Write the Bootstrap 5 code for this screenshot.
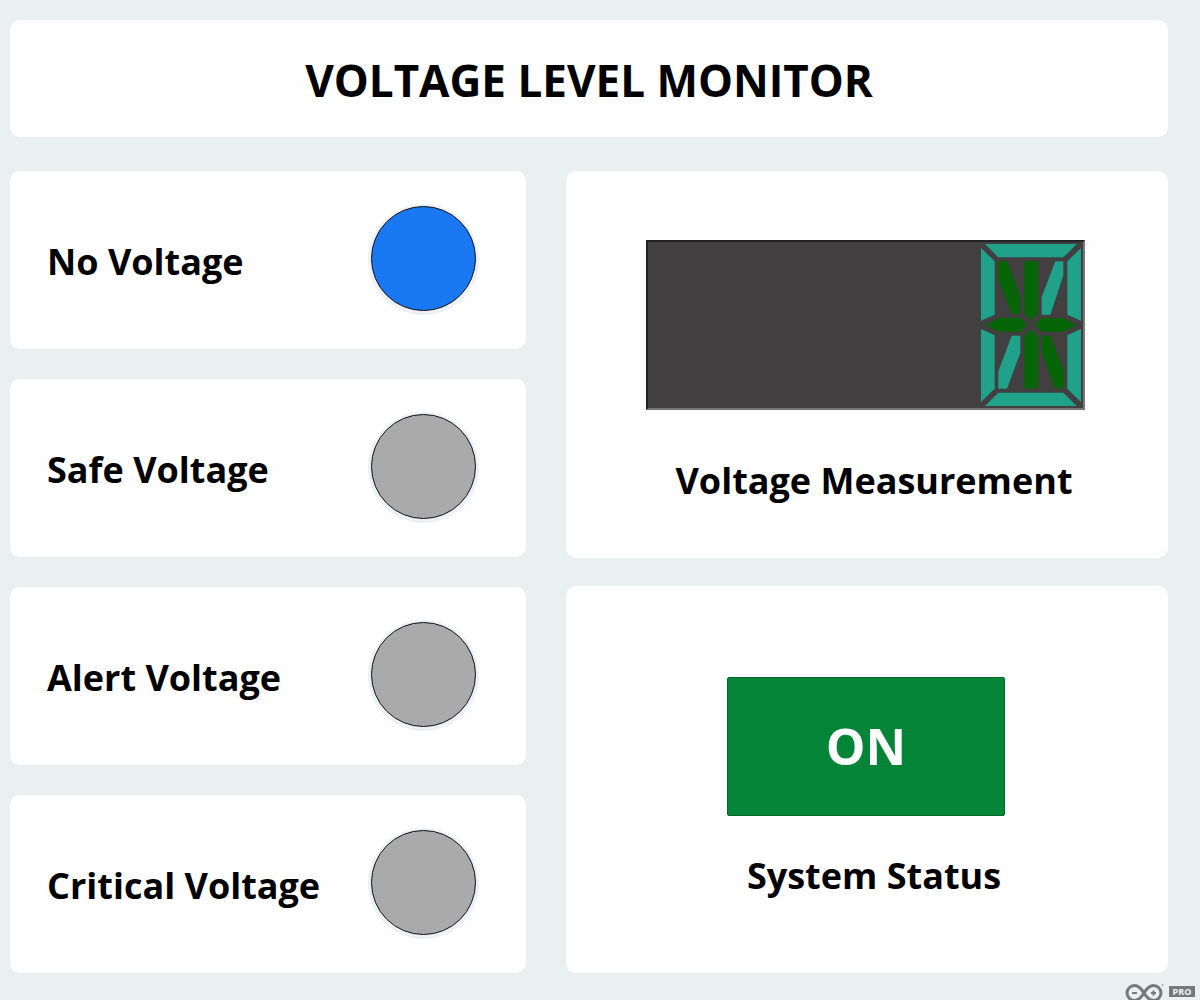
<!DOCTYPE html>
<html lang="en">
<head>
<meta charset="utf-8">
<meta name="viewport" content="width=device-width, initial-scale=1">
<title>Voltage Level Monitor</title>
<link href="https://cdn.jsdelivr.net/npm/bootstrap@5.3.0/dist/css/bootstrap.min.css" rel="stylesheet">
<style>
body{background:#eaeff0;color:#000;font-family:"Open Sans","Noto Sans",sans-serif}
.board{padding:20px 32px 0 10px}
.panel{background:#fefefe;border-radius:10px}
.title-bar{height:117px;margin-bottom:34px}
.title-bar h1{font-size:44px;line-height:60px;font-weight:700;padding-top:2px}
.panels{gap:40px}
.levels{flex:516 1 0;gap:30px}
.readings{flex:602 1 0;gap:28px}
.level{height:178px;padding:0 50px 3px 37px}
.caption{font-size:36px;line-height:50px;font-weight:700}
.level .caption{padding-top:6px}
.lamp{width:105px;height:105px;border:1px solid #111;background:#aaa;box-shadow:0 1px 0 3px #edf0f4}
.lamp-blue{background:#1a78f2}
.reading{height:387px}
.reading .caption{padding-left:14px}
.meter{width:439px;height:170px;margin:69px 3px 46px 0;background:#413f40;border:2px solid #222;border-right-color:#777;border-bottom-color:#777}
.status-btn{width:278px;height:139px;margin:91px 2px 35px 0;background:#038436;border:1px solid #04682c;border-radius:2px;color:#fdfdfd;font-size:50px;font-weight:700;padding:0}
.status-btn:hover{background:#027a31}
.brand{padding-top:10px;margin-right:-27px;gap:5px}
.pro{background:#75797b;color:#f0f4f4;font:700 9px/11px "Open Sans",sans-serif;width:26px;height:11px}
</style>
<script src="https://cdn.jsdelivr.net/npm/bootstrap@5.3.0/dist/js/bootstrap.bundle.min.js"></script>
</head>
<body>
<main class="board">
<header class="panel title-bar d-flex align-items-center justify-content-center"><h1 class="m-0">VOLTAGE LEVEL MONITOR</h1></header>
<div class="panels d-flex">
<section class="levels d-flex flex-column">
<div class="panel level d-flex align-items-center justify-content-between"><span class="caption">No Voltage</span><span class="lamp lamp-blue rounded-circle"></span></div>
<div class="panel level d-flex align-items-center justify-content-between"><span class="caption">Safe Voltage</span><span class="lamp rounded-circle"></span></div>
<div class="panel level d-flex align-items-center justify-content-between"><span class="caption">Alert Voltage</span><span class="lamp rounded-circle"></span></div>
<div class="panel level d-flex align-items-center justify-content-between"><span class="caption">Critical Voltage</span><span class="lamp rounded-circle"></span></div>
</section>
<section class="readings d-flex flex-column">
<div class="panel reading d-flex flex-column align-items-center">
<div class="meter d-flex justify-content-end">
<svg width="104" height="166" viewBox="27 36 312 498" aria-hidden="true">
<g fill="#20a28a">
<path d="M45 42H320L280 82H85Z"/>
<path d="M33 54L74 94V254L33 272Z"/>
<path d="M333 54L292 94V254L333 272Z"/>
<path d="M33 297L74 316V476L33 516Z"/>
<path d="M333 297L292 316V476L333 516Z"/>
<path d="M85 488H280L320 528H45Z"/>
<path d="M256 94H280V136L241 254H215V202Z"/>
<path d="M125 317H151V368L111 476H85V424Z"/>
</g>
<g fill="#066506">
<path d="M85 94H112L151 202V252H125L85 146Z"/>
<path d="M162 94H204V250L183 271L162 250Z"/>
<path d="M215 317H241L281 424V475H255L215 369Z"/>
<path d="M162 319L183 298L204 319V475H162Z"/>
<path d="M46 285L87 264H151L171 285L151 305H87Z"/>
<path d="M195 285L215 264H279L320 285L279 305H215Z"/>
</g>
</svg>
</div>
<div class="caption">Voltage Measurement</div>
</div>
<div class="panel reading d-flex flex-column align-items-center">
<button type="button" class="btn status-btn" aria-describedby="status-caption">ON</button>
<div class="caption" id="status-caption">System Status</div>
</div>
</section>
</div>
<footer class="brand d-flex justify-content-end align-items-center">
<svg width="39" height="17" viewBox="0 0 39 17" fill="none" stroke="#75797b" role="img" aria-label="Arduino">
<path stroke-width="3" d="M19 10C16 5 13 2.500 9.500 2.500A7.500 7.500 0 0 0 9.500 17.500C13 17.500 16 15 19 10C22 5 25 2.500 28.500 2.500A7.500 7.500 0 0 1 28.500 17.500C25 17.500 22 15 19 10Z"/>
<path stroke-width="2" d="M7 10H12M26 10H31M28.500 7.500V12.500"/>
<circle cx="37.500" cy="2" r=".7" stroke-width=".5"/>
</svg>
<span class="pro text-center">PRO</span>
</footer>
</main>
</body>
</html>
